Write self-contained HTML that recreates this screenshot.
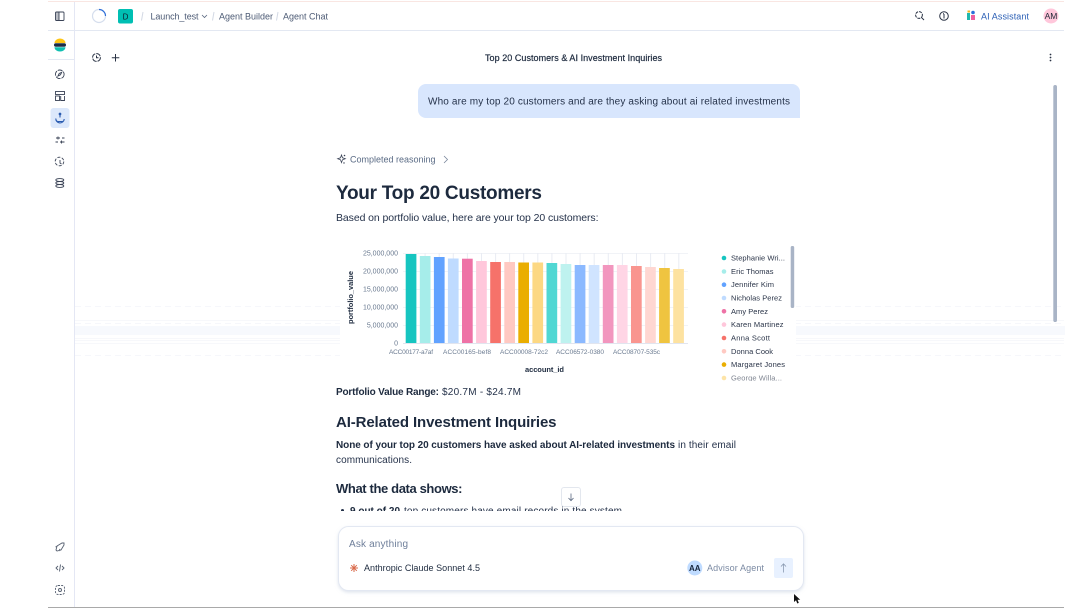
<!DOCTYPE html>
<html><head><meta charset="utf-8"><title>Agent Chat</title>
<style>
html,body{margin:0;padding:0;background:#fff;width:1080px;height:608px;overflow:hidden}
svg{display:block;font-family:"Liberation Sans",sans-serif;filter:blur(.25px)}
.i{fill:none;stroke:#2a3345;stroke-width:1}
.nav{fill:none;stroke:#3a4356;stroke-width:.9}
.bd{font-weight:700}
.lg{font-size:7.5px;fill:#2a3448}
.yt{font-size:7px;fill:#6a7a90;text-anchor:end}
.xt{font-size:6.5px;fill:#6a7a90}
.gl{stroke:#f1f3f7;stroke-width:1}
</style></head><body>
<svg width="1080" height="608" viewBox="0 0 1080 608" xmlns="http://www.w3.org/2000/svg">
<defs>
<clipPath id="cb"><rect x="336" y="480" width="470" height="31"/></clipPath>
<clipPath id="cl"><rect x="715" y="246" width="75" height="135"/></clipPath>
<filter id="sh" x="-5%" y="-20%" width="110%" height="140%"><feDropShadow dx="0" dy="1.5" stdDeviation="1.5" flood-color="#c9d2e2" flood-opacity=".6"/></filter>
</defs>

<!-- frame -->
<rect x="48" y="1" width="1016" height="1" fill="#f9e6e2"/>
<rect x="48" y="30" width="1016" height="1" fill="#e3e8f2"/>
<rect x="48" y="59" width="26" height="1" fill="#e3e8f2"/>
<rect x="74" y="2" width="1" height="605" fill="#e4e7f4"/>
<rect x="48" y="607" width="1016" height="1" fill="#a9a9a9"/>

<!-- faded artifact bands -->
<g>
<rect x="75" y="326" width="990" height="9" fill="#f7f9fd"/>
<path d="M75 306.500H1064M75 323.500H1064M75 355.500H1064" stroke="#f6f7fb" stroke-width="1" stroke-dasharray="6 4"/>
<path d="M75 320.500H1064M75 338.500H1064M75 340.500H1064M75 343.500H1064" stroke="#f7f8fb" stroke-width="1"/>
</g>
<rect x="340" y="236" width="456" height="146" fill="#fff"/>

<!-- top bar -->
<circle cx="99" cy="16" r="6.500" fill="none" stroke="#d5deed" stroke-width="1.200"/>
<path d="M99 9.500A6.500 6.500 0 0 1 105.500 16" fill="none" stroke="#2f6fd8" stroke-width="1.200"/>
<rect x="118" y="9" width="15" height="14.500" rx="2" fill="#00bfb3"/>
<text x="125.500" y="19.500" font-size="8" text-anchor="middle" fill="#0b2030">D</text>
<path d="M143 12L141.500 20.500M214 12L212.500 20.500M278 12L276.500 20.500" stroke="#d3d9e4" stroke-width="1" fill="none"/>
<text x="150.500" y="19.500" font-size="9" fill="#4d5b75" textLength="48">Launch_test</text>
<path d="M202 15l2.500 2.500L207 15" fill="none" stroke="#5a6880" stroke-width=".8"/>
<text x="219" y="19.500" font-size="9" fill="#4d5b75" textLength="54">Agent Builder</text>
<text x="283" y="19.500" font-size="9" fill="#4d5b75" textLength="45">Agent Chat</text>

<!-- top right -->
<circle cx="919" cy="15" r="3.400" class="i" stroke-dasharray="3 1"/>
<path d="M921.500 17.500L924 20" class="i" stroke-width="1.300"/>
<circle cx="944" cy="16" r="4.300" class="i" stroke="#444"/>
<path d="M944 14v4.500M943 13.800h1" class="i" stroke-width=".8"/>
<rect x="967" y="13" width="3" height="7" fill="#1fb8ae"/><rect x="971" y="15" width="4" height="5" fill="#ee5f9f"/>
<rect x="967.500" y="10.500" width="2.500" height="2" fill="#f3b71c"/><circle cx="973" cy="12.500" r="1.800" fill="#2a6fdb"/>
<text x="981" y="19.500" font-size="9" fill="#2b5fb5" textLength="48">AI Assistant</text>
<circle cx="1051" cy="16" r="7.500" fill="#ffc7db"/>
<text x="1051" y="19.200" font-size="8.500" text-anchor="middle" fill="#222a38">AM</text>

<!-- sidebar -->
<rect x="50.500" y="108" width="19" height="20" rx="3" fill="#dce8fb"/>
<g class="nav">
<rect x="55.500" y="12" width="8.500" height="8.500" rx="1"/><path d="M59 12v8.500"/><rect x="56" y="12.500" width="3" height="7.500" fill="#3a4356" opacity=".35" stroke="none"/>
<circle cx="59.800" cy="74.300" r="4.300" stroke-dasharray="5 1"/><path d="M58 76l1.200-2.500 2.500-1.200-1.200 2.500z"/>
<rect x="55.500" y="91.500" width="9" height="3"/><rect x="55.500" y="96" width="4" height="4.500"/><path d="M60.700 96v4.500h3.800V96"/>
<path d="M56 138h4M62 138h2.500M55.500 142h2.500M60 142h4.500"/><path d="M58 136.500v3M61.500 140.500v3"/>
<circle cx="59.500" cy="161.500" r="4.300" stroke-dasharray="3 1.500"/><path d="M60 160v3l1.500 1"/>
<ellipse cx="59.800" cy="180" rx="4" ry="1.400"/><ellipse cx="59.800" cy="183" rx="4" ry="1.400"/><ellipse cx="59.800" cy="186" rx="4" ry="1.400"/>
</g>
<g fill="none" stroke="#2a5bb0" stroke-width="1.100">
<path d="M55.800 118.500a4.200 4.200 0 1 0 8.400 0.500c0 1.500-1 2.500-2 2.500h-4.500c-1 0-1.900-1.500-1.900-3z"/><path d="M60 113.500v4"/><circle cx="60" cy="114" r=".8" fill="#2a5bb0"/>
</g>
<!-- logo -->
<path d="M54.500 43a5.500 4.500 0 0 1 11 0z" fill="#fec514"/>
<rect x="54" y="43.200" width="12" height="3.500" rx="1.700" fill="#1b2b44"/>
<path d="M54.500 47.200a5.500 4.300 0 0 0 11 0z" fill="#0fbfb1"/>
<!-- bottom sidebar -->
<g fill="none" stroke="#555f70" stroke-width=".9">
<path d="M56 550l1-4 5-3 2 0 0 2-3 5-4 1zM55.500 547l2-1M59 551l1-2"/>
<path d="M58 566l-2 2 2 2M62 566l2 2-2 2M60.500 564.500l-1 7"/>
<circle cx="60" cy="590" r="1.500"/><rect x="55.500" y="585.500" width="9" height="9" rx="2.500" stroke-dasharray="2 1.200"/>
</g>

<!-- sub header -->
<circle cx="96.500" cy="57.500" r="3.900" class="i" stroke-dasharray="5 1"/>
<path d="M96.500 55.500v2.200h2" class="i" stroke-width=".8"/>
<path d="M115.500 54v7.500M111.800 57.700h7.500" class="i"/>
<text x="485" y="61" font-size="9" fill="#1d2a3e" textLength="177" style="font-weight:400;stroke:#1d2a3e;stroke-width:.2">Top 20 Customers &amp; AI Investment Inquiries</text>
<circle cx="1050.500" cy="54.500" r=".9" fill="#2a3345"/><circle cx="1050.500" cy="57.500" r=".9" fill="#2a3345"/><circle cx="1050.500" cy="60.500" r=".9" fill="#2a3345"/>

<!-- bubble -->
<path d="M426 84H792a8 8 0 0 1 8 8V118H426a8 8 0 0 1-8-8V92a8 8 0 0 1 8-8z" fill="#d8e6fd"/>
<text x="428" y="104.500" font-size="10" fill="#25324a" textLength="362">Who are my top 20 customers and are they asking about ai related investments</text>

<!-- reasoning -->
<path d="M341.500 155l1 2.800 2.800 1-2.800 1-1 2.800-1-2.800-2.800-1 2.800-1z" fill="none" stroke="#3a4356" stroke-width=".8"/>
<circle cx="344.500" cy="155.500" r=".8" fill="#3a4356"/><circle cx="344" cy="163" r=".7" fill="#3a4356"/>
<text x="350" y="162.500" font-size="9" fill="#5a6b85" textLength="85.500">Completed reasoning</text>
<path d="M444 156l3.500 3.500-3.500 3.500" fill="none" stroke="#7a879c" stroke-width=".8"/>

<text x="336" y="199" font-size="19" class="bd" fill="#1d2a3e" textLength="206">Your Top 20 Customers</text>
<text x="336" y="221" font-size="10.500" fill="#25324a" textLength="262.500">Based on portfolio value, here are your top 20 customers:</text>

<!-- chart grid -->
<path class="gl" d="M403 253.500H688M403 271.500H688M403 289.500H688M403 307.500H688M403 325.500H688"/>
<path stroke="#e9ecf3" d="M411 253V343M425.100 253V343M439.200 253V343M453.300 253V343M467.400 253V343M481.500 253V343M495.600 253V343M509.600 253V343M523.700 253V343M537.800 253V343M551.900 253V343M566 253V343M580.100 253V343M594.200 253V343M608.300 253V343M622.400 253V343M636.500 253V343M650.600 253V343M664.700 253V343M678.800 253V343"/>
<path stroke="#e1e5ef" d="M403 343.500H688"/>
<!-- bars -->
<rect x="405.700" y="254" width="10.700" height="89" fill="#16c5c0"/>
<rect x="419.800" y="256" width="10.700" height="87" fill="#a6edea"/>
<rect x="433.900" y="257" width="10.700" height="86" fill="#61a2ff"/>
<rect x="447.900" y="258.500" width="10.700" height="84.500" fill="#bfdbff"/>
<rect x="462" y="258.700" width="10.700" height="84.300" fill="#ee72a6"/>
<rect x="476.100" y="261" width="10.700" height="82" fill="#ffc7db"/>
<rect x="490.200" y="262" width="10.700" height="81" fill="#f6726a"/>
<rect x="504.300" y="262" width="10.700" height="81" fill="#ffc9c2"/>
<rect x="518.300" y="262.500" width="10.700" height="80.500" fill="#eaae01"/>
<rect x="532.400" y="262.500" width="10.700" height="80.500" fill="#fcd883"/>
<rect x="546.500" y="263" width="10.700" height="80" fill="#50d7d3"/>
<rect x="560.600" y="264" width="10.700" height="79" fill="#bef2ef"/>
<rect x="574.700" y="265" width="10.700" height="78" fill="#8bb9ff"/>
<rect x="588.700" y="265" width="10.700" height="78" fill="#d0e4ff"/>
<rect x="602.800" y="265" width="10.700" height="78" fill="#f296be"/>
<rect x="616.900" y="265" width="10.700" height="78" fill="#ffd5e5"/>
<rect x="631" y="266" width="10.700" height="77" fill="#f9958f"/>
<rect x="645.100" y="267" width="10.700" height="76" fill="#ffd7d2"/>
<rect x="659.100" y="268" width="10.700" height="75" fill="#efc440"/>
<rect x="673.200" y="269" width="10.700" height="74" fill="#fde2a0"/>
<!-- axes -->
<text class="yt" x="398" y="255.500">25,000,000</text>
<text class="yt" x="398" y="273.500">20,000,000</text>
<text class="yt" x="398" y="291.500">15,000,000</text>
<text class="yt" x="398" y="309.500">10,000,000</text>
<text class="yt" x="398" y="327.500">5,000,000</text>
<text class="yt" x="398" y="345.500">0</text>
<text class="xt" x="389" y="354" textLength="44">ACC00177-a7af</text>
<text class="xt" x="443" y="354" textLength="48">ACC00165-bef8</text>
<text class="xt" x="500" y="354" textLength="48">ACC00008-72c2</text>
<text class="xt" x="556" y="354" textLength="48">ACC06572-0380</text>
<text class="xt" x="613" y="354" textLength="47">ACC08707-535c</text>
<text x="525" y="372" font-size="7.500" class="bd" fill="#1d2a3e" textLength="39">account_id</text>
<text transform="translate(353 324) rotate(-90)" font-size="7.500" class="bd" fill="#1d2a3e" textLength="53">portfolio_value</text>
<!-- legend -->
<g clip-path="url(#cl)">
<circle cx="724" cy="258" r="2.300" fill="#16c5c0"/><text class="lg" x="731" y="260.500" textLength="54">Stephanie Wri...</text>
<circle cx="724" cy="271.500" r="2.300" fill="#a6edea"/><text class="lg" x="731" y="274" textLength="42.500">Eric Thomas</text>
<circle cx="724" cy="284.700" r="2.300" fill="#61a2ff"/><text class="lg" x="731" y="287.200" textLength="43">Jennifer Kim</text>
<circle cx="724" cy="298" r="2.300" fill="#bfdbff"/><text class="lg" x="731" y="300.500" textLength="51">Nicholas Perez</text>
<circle cx="724" cy="311.300" r="2.300" fill="#ee72a6"/><text class="lg" x="731" y="313.800" textLength="37">Amy Perez</text>
<circle cx="724" cy="324.600" r="2.300" fill="#ffc7db"/><text class="lg" x="731" y="327.100" textLength="52.500">Karen Martinez</text>
<circle cx="724" cy="338" r="2.300" fill="#f6726a"/><text class="lg" x="731" y="340.500" textLength="39">Anna Scott</text>
<circle cx="724" cy="351.300" r="2.300" fill="#ffc9c2"/><text class="lg" x="731" y="353.800" textLength="42">Donna Cook</text>
<circle cx="724" cy="364.600" r="2.300" fill="#eaae01"/><text class="lg" x="731" y="367.100" textLength="54">Margaret Jones</text>
<circle cx="724" cy="378" r="2.300" fill="#fcd883" opacity=".7"/><text class="lg" x="731" y="380.500" textLength="51" opacity=".6">George Willa...</text>
</g>
<rect x="790.700" y="246" width="3.500" height="62" rx="1.500" fill="#a9b4c6"/>
<rect x="1053.300" y="85" width="3.700" height="237" rx="1.800" fill="#a9b4c6"/>

<!-- body text -->
<text x="336" y="395" font-size="10" class="bd" fill="#1d2a3e" textLength="103">Portfolio Value Range:</text>
<text x="442" y="395" font-size="10" fill="#25324a" textLength="79">$20.7M - $24.7M</text>
<text x="336" y="427" font-size="15" class="bd" fill="#1d2a3e" textLength="220.500">AI-Related Investment Inquiries</text>
<text x="336" y="448" font-size="10" class="bd" fill="#1d2a3e" textLength="339">None of your top 20 customers have asked about AI-related investments</text>
<text x="678" y="448" font-size="10" fill="#25324a" textLength="58">in their email</text>
<text x="336" y="463" font-size="10" fill="#25324a" textLength="76">communications.</text>
<text x="336" y="493" font-size="13" class="bd" fill="#1d2a3e" textLength="126.500">What the data shows:</text>
<g clip-path="url(#cb)">
<circle cx="342.500" cy="510.500" r="1.500" fill="#25324a"/>
<text x="350" y="514" font-size="10" class="bd" fill="#1d2a3e" textLength="50">9 out of 20</text>
<text x="404" y="514" font-size="10" fill="#25324a" textLength="218">top customers have email records in the system</text>
</g>
<!-- scroll down -->
<rect x="561.500" y="487.500" width="19" height="19" rx="2.500" fill="#fff" stroke="#e3e7ee"/>
<path d="M571 493.500v7M568.500 498l2.500 2.700 2.500-2.700" fill="none" stroke="#5a6880" stroke-width=".8"/>

<!-- input -->
<rect x="338.500" y="526.500" width="465" height="64" rx="10" fill="#fff" stroke="#e3e8f2" filter="url(#sh)"/>
<text x="349" y="547" font-size="10" fill="#6f7f9a" textLength="59">Ask anything</text>
<g stroke="#d9694a" stroke-width="1" fill="none"><path d="M354 564v8M350 568h8M351.200 565.200l5.600 5.600M356.800 565.200l-5.600 5.600"/></g>
<text x="364" y="571" font-size="9" fill="#1d2a3e" textLength="116">Anthropic Claude Sonnet 4.5</text>
<circle cx="694.800" cy="568" r="7.500" fill="#bfdbff"/>
<text x="694.800" y="571" font-size="8" class="bd" text-anchor="middle" fill="#14233a">AA</text>
<text x="707" y="571" font-size="9" fill="#7b8aa3" textLength="57">Advisor Agent</text>
<rect x="774" y="558" width="19" height="20" rx="2" fill="#e8f1ff"/>
<path d="M783.500 572.500v-8.500M781 566.500l2.500-2.700 2.500 2.700" fill="none" stroke="#8a9ab2" stroke-width=".8"/>
<!-- cursor -->
<path d="M794 594v8l2-1.800 1.300 3.300 1.500-.6-1.300-3.200h2.700z" fill="#111"/>
</svg>
</body></html>
